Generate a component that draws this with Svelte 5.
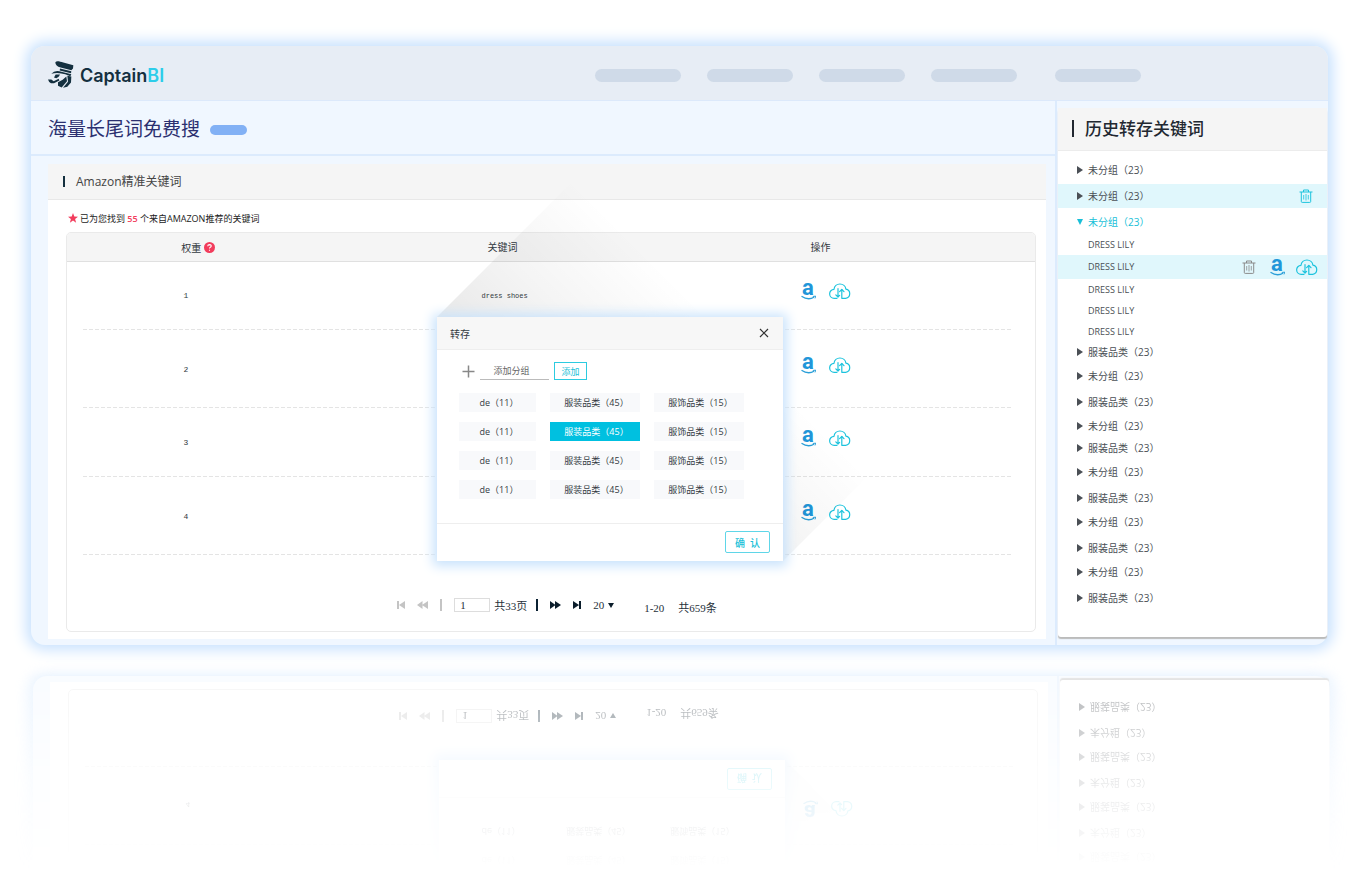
<script>
  const groups = ['de（11）', '服装品类（45）', '服饰品类（15）'];
  const rows = [1, 2, 3, 4];

  let keyword = $state('');
  let page = $state('1');
  let pageSize = $state('20');
  let selected = $state('1-1');

  const history = [
    { label: '未分组（23）' },
    { label: '未分组（23）', active: true, loose: true },
    { label: '未分组（23）', open: true, loose: true },
    { label: 'DRESS LILY', child: true },
    { label: 'DRESS LILY', child: true, active: true },
    { label: 'DRESS LILY', child: true },
    { label: 'DRESS LILY', child: true },
    { label: 'DRESS LILY', child: true },
    { label: '服装品类（23）', tight: true },
    { label: '未分组（23）' },
    { label: '服装品类（23）', loose: true },
    { label: '未分组（23）' },
    { label: '服装品类（23）', tight: true },
    { label: '未分组（23）' },
    { label: '服装品类（23）', loose: true },
    { label: '未分组（23）' },
    { label: '服装品类（23）', loose: true },
    { label: '未分组（23）' },
    { label: '服装品类（23）', loose: true }
  ];
</script>

{#snippet amazon()}
  <svg class="amazon" width="16" height="18" viewBox="0 0 16 18" aria-hidden="true">
    <text x="7" y="13" text-anchor="middle">a</text>
    <path d="M.5 14.300 Q7 18.600 13 15.300" fill="none" stroke="#2a9fd8" stroke-width="1.300" />
    <path d="M11.800 14.500 L14.600 14.100 L14 16.400" fill="none" stroke="#2a9fd8" />
  </svg>
{/snippet}

{#snippet cloud()}
  <svg width="22" height="18" viewBox="0 0 22 18" fill="none" stroke="#1cc3dd" stroke-width="1.200" stroke-linecap="round" stroke-linejoin="round" aria-hidden="true">
    <path d="M8 16.300 H5.300 A4.500 4.500 0 0 1 5 7.300 A6 6 0 0 1 16.900 7.200 A4.600 4.600 0 0 1 16.700 16.300 H12.800 V7.500" />
    <path d="M9 6.500 V15 M6.800 12.800 L9 15 L10.600 13.400 M10.600 9.700 L12.800 7.500 L15 9.700" />
  </svg>
{/snippet}

{#snippet trash()}
  <svg width="14" height="14" viewBox="0 0 14 14" fill="none" stroke="currentColor" aria-hidden="true">
    <path d="M.5 3 H13.500 M4.500 3 V1 H9.500 V3 M2.300 3 V12.500 Q2.300 13.400 3.200 13.400 H10.800 Q11.700 13.400 11.700 12.500 V3" />
    <path stroke-width=".8" d="M4.700 6 V10.500 M7 5 V11.500 M9.300 6 V10.500" />
  </svg>
{/snippet}

{#snippet board(id)}
  <div class="board">
    <header class="topbar">
      <a class="logo" href="#home">
        <svg width="26" height="27" viewBox="0 0 78 80" fill="#14303f" aria-hidden="true">
          <path d="M22 3 C27 -2 36 2 46 4 L76 12 L75 22 L70 27 L38 19 Q22 14 22 3Z" />
          <path d="M36 22 L70 30 L69 36 L35 28Z" />
          <path d="M10 38 Q19 27 34 30 L70 39 L67 45 Q50 38 40 37 Q26 33 10 38Z" />
          <path d="M23 40 L36 40 L32 47 L25 51 L18 49Z" />
          <path d="M0 55 H10 L17 60 L32 53 L34 58 L18 66 H9 Q2 63 0 55Z" />
          <path d="M58 44 L70 46 L69 64 L58 77 L45 80 L60 62 Z" />
          <path d="M30 63 L44 56 L55 46 L57 60 L41 79 L30 74Z" />
        </svg>
        <span class="brand">Captain<b>BI</b></span>
      </a>
      <div class="nav">
        <span></span><span></span><span></span><span></span><span class="last"></span>
      </div>
    </header>

    <div class="content">
      <main>
        <div class="title">
          <h1>海量长尾词免费搜</h1>
          <span class="pill"></span>
        </div>

        <section class="card">
          <h2>Amazon精准关键词</h2>
          <p class="found">
            <svg width="10" height="10" viewBox="0 0 10 10" aria-hidden="true"><path d="M5 0 L6.300 3.500 L10 3.700 L7.100 6 L8.100 9.700 L5 7.600 L1.900 9.700 L2.900 6 L0 3.700 L3.700 3.500Z" fill="#f23c5c" /></svg>
            <span>已为您找到 <b>55</b> 个来自AMAZON推荐的关键词</span>
          </p>

          <div class="box">
            <table>
              <thead>
                <tr>
                  <th class="weight">
                    <span>权重</span>
                    <svg width="11" height="11" viewBox="0 0 11 11" aria-hidden="true">
                      <circle cx="5.500" cy="5.500" r="5.500" fill="#f23c5c" />
                      <path d="M3.700 4.300 Q3.800 2.600 5.500 2.600 Q7.300 2.700 7.200 4.100 Q7.100 5 6 5.400 Q5.500 5.700 5.500 6.600 M5.500 7.700 V8.800" fill="none" stroke="#fff" stroke-width="1.100" />
                    </svg>
                  </th>
                  <th class="word">关键词</th>
                  <th class="ops">操作</th>
                </tr>
              </thead>
              <tbody>
                {#each rows as n}
                  <tr class:tall={n % 2 === 0}>
                    <td class="weight">{n}</td>
                    <td class="word">{n === 1 ? 'dress shoes' : ''}</td>
                    <td class="ops">
                      <div class="icons">
                        <button aria-label="Amazon">{@render amazon()}</button>
                        <button aria-label="转存">{@render cloud()}</button>
                      </div>
                    </td>
                  </tr>
                {/each}
              </tbody>
            </table>

            <div class="pager">
              <button class="off" aria-label="首页">
                <svg width="8" height="8" viewBox="0 0 8 8"><path d="M0 0 H2 V8 H0Z M8 0 V8 L2 4Z" /></svg>
              </button>
              <button class="off" aria-label="上一页">
                <svg width="11" height="8" viewBox="0 0 11 8"><path d="M5.500 0 V8 L0 4Z M11 0 V8 L5 4Z" /></svg>
              </button>
              <i class="bar off"></i>
              <input id="page-{id}" aria-label="页码" bind:value={page} />
              <label for="page-{id}">共33页</label>
              <i class="bar"></i>
              <button aria-label="下一页">
                <svg width="11" height="8" viewBox="0 0 11 8"><path d="M0 0 V8 L5.500 4Z M5 0 V8 L11 4Z" /></svg>
              </button>
              <button aria-label="末页">
                <svg width="8" height="8" viewBox="0 0 8 8"><path d="M6 0 H8 V8 H6Z M0 0 V8 L6 4Z" /></svg>
              </button>
              <span class="size">
                <select aria-label="每页条数" bind:value={pageSize}>
                  <option>20</option>
                  <option>50</option>
                </select>
                <svg width="6" height="5" viewBox="0 0 6 5"><path d="M0 0 H6 L3 5Z" /></svg>
              </span>
              <span class="total"><span>1-20</span><span>共659条</span></span>
            </div>
          </div>
        </section>
      </main>

      <aside>
        <h2>历史转存关键词</h2>
        <ul>
          {#each history as item}
            <li class:child={item.child} class:active={item.active} class:open={item.open} class:loose={item.loose} class:tight={item.tight}>
              <button class="entry">
                {#if !item.child}
                  <svg width="6" height="8" viewBox="0 0 6 8" aria-hidden="true">
                    <path d={item.open ? 'M0 1 H6 L3 7Z' : 'M0 0 L6 4 L0 8Z'} fill="currentColor" />
                  </svg>
                {/if}
                <span>{item.label}</span>
              </button>
              {#if item.active}
                <div class="tools" class:single={!item.child}>
                  <button aria-label="删除" class="bin">{@render trash()}</button>
                  {#if item.child}
                    <button aria-label="Amazon">{@render amazon()}</button>
                    <button aria-label="转存">{@render cloud()}</button>
                  {/if}
                </div>
              {/if}
            </li>
          {/each}
        </ul>
      </aside>
    </div>

    <!-- long diagonal shade behind the dialog -->
    <svg class="shade" width="1000" height="560" viewBox="0 0 1000 560" aria-hidden="true">
      <defs>
        <linearGradient id="shade-{id}" gradientUnits="userSpaceOnUse" x1="406" y1="271" x2="543" y2="134">
          <stop offset="0" stop-color="#000" stop-opacity=".09" />
          <stop offset=".5" stop-color="#000" stop-opacity=".04" />
          <stop offset="1" stop-color="#000" stop-opacity="0" />
        </linearGradient>
      </defs>
      <path d="M406 271 L600 77 L950 317 L752 515Z" fill="url(#shade-{id})" />
    </svg>

    <div class="dialog" role="dialog" aria-label="转存">
      <div class="dialog-head">
        <h3>转存</h3>
        <button aria-label="关闭">
          <svg width="10" height="10" viewBox="0 0 10 10"><path d="M1 1 L9 9 M9 1 L1 9" stroke="#333" stroke-width="1.200" /></svg>
        </button>
      </div>
      <div class="add">
        <svg width="13" height="13" viewBox="0 0 13 13" aria-hidden="true"><path d="M6.500 .5 V12.500 M.5 6.500 H12.500" stroke="#888" stroke-width="1.500" /></svg>
        <input aria-label="添加分组" placeholder="添加分组" bind:value={keyword} />
        <button>添加</button>
      </div>
      <div class="chips">
        {#each rows as n}
          {#each groups as g, i}
            <button class:on={selected === `${n - 1}-${i}`} onclick={() => (selected = `${n - 1}-${i}`)}>{g}</button>
          {/each}
        {/each}
      </div>
      <div class="dialog-foot">
        <button>确&nbsp; 认</button>
      </div>
    </div>
  </div>
{/snippet}

<div class="stage">
  {@render board('main')}
</div>
<div class="reflection" aria-hidden="true" inert>
  <div class="flip">
    {@render board('mirror')}
  </div>
</div>

<style>
  :global(body) {
    background: #fff;
    font-family: "Open Sans", "Noto Sans CJK SC", sans-serif;
    color: #333a42;
  }

  h1, h2, h3, p, ul {
    margin: 0;
    padding: 0;
    font-weight: 400;
  }

  button, input, select {
    font: inherit;
    color: inherit;
    background: none;
    border: 0;
    padding: 0;
    margin: 0;
  }

  button {
    cursor: pointer;
  }

  svg {
    display: block;
    flex: none;
  }

  .stage {
    padding: 46px 29px 0 31px;
  }

  .reflection {
    height: 198px;
    padding: 31px 27px 0 33px;
    overflow: hidden;
    -webkit-mask-image: linear-gradient(transparent 12px, rgba(0, 0, 0, .4) 31px, rgba(0, 0, 0, .34) 60px, rgba(0, 0, 0, .14) 130px, transparent 224px);
    mask-image: linear-gradient(transparent 12px, rgba(0, 0, 0, .4) 31px, rgba(0, 0, 0, .34) 60px, rgba(0, 0, 0, .14) 130px, transparent 224px);
  }

  .flip {
    transform: scaleY(-1);
  }

  .board {
    position: relative;
    border-radius: 14px;
    background: #f0f7ff;
    box-shadow: 0 0 14px 5px #c9e2fe;
  }

  .topbar {
    display: flex;
    align-items: center;
    justify-content: space-between;
    height: 54px;
    padding: 0 187px 0 17px;
    border-radius: 14px 14px 0 0;
    border-bottom: 1px solid #dce9fb;
    background: #e7edf5;
  }

  .logo {
    display: flex;
    align-items: center;
    gap: 6px;
    padding-top: 3px;
    text-decoration: none;
  }

  .brand {
    padding-top: 3px;
    font: 600 18px/24px Inter, sans-serif;
    color: #14303f;
  }

  .brand b {
    font-weight: 600;
    color: #2dcdea;
  }

  .nav {
    display: flex;
    gap: 26px;
    padding-top: 4px;
  }

  .nav span {
    width: 86px;
    height: 13px;
    border-radius: 7px;
    background: #cfdae8;
  }

  .nav .last {
    margin-left: 12px;
  }

  .content {
    display: flex;
  }

  main {
    flex: 1;
    padding-bottom: 6px;
    border-right: 2px solid #dcebfd;
  }

  .title {
    display: flex;
    align-items: center;
    gap: 10px;
    height: 51px;
    padding: 2px 18px 0 17px;
    border-bottom: 2px solid #dcebfd;
  }

  .title h1 {
    font-size: 19px;
    line-height: 26px;
    color: #2b3070;
  }

  .pill {
    width: 37px;
    height: 10px;
    margin-top: 2px;
    border-radius: 5px;
    background: #82b1f5;
  }

  .card {
    margin: 8px 9px 0 17px;
    padding-bottom: 7px;
    background: #fff;
  }

  .card h2 {
    height: 35px;
    padding-left: 28px;
    border-bottom: 1px solid #e8e8e8;
    background: #f5f5f5;
    font-size: 12px;
    line-height: 35px;
    color: #444;
  }

  .card h2::before,
  aside h2::before {
    content: "";
    float: left;
    width: 2px;
    height: 11px;
    margin: 12px 0 0 -13px;
    background: #14303f;
  }

  .found {
    display: flex;
    align-items: center;
    gap: 2px;
    height: 32px;
    padding: 4px 20px 0;
    box-sizing: border-box;
    font-size: 9px;
    color: #222;
  }

  .found b {
    font-weight: 600;
    color: #f23c5c;
  }

  .box {
    margin: 0 10px 0 18px;
    border: 1px solid #eaeaea;
    border-radius: 5px;
    overflow: hidden;
  }

  table {
    width: 100%;
    border-collapse: collapse;
    table-layout: fixed;
  }

  th {
    box-sizing: border-box;
    height: 28px;
    padding: 0;
    border-bottom: 1px solid #e0e0e0;
    background: #f5f5f5;
    font-size: 10px;
    font-weight: 400;
  }

  th.weight span,
  th.weight svg {
    display: inline-block;
    vertical-align: middle;
  }

  th.weight {
    padding-left: 20px;
  }

  .weight {
    width: 25%;
    text-align: center;
  }

  .word {
    width: 40%;
    text-align: center;
  }

  th.ops {
    padding-right: 90px;
  }

  tbody tr {
    height: 69px;
    background: repeating-linear-gradient(90deg, #e4e4e4 0 4px, transparent 4px 6px) 16px 100% / calc(100% - 38px) 1px no-repeat;
  }

  tbody tr.tall {
    height: 78px;
  }

  td {
    padding: 0;
    font: 8px "Liberation Mono", monospace;
  }

  td.weight {
    padding-right: 4px;
  }

  td.word {
    padding-left: 4px;
    font-size: 7px;
  }

  .icons {
    display: flex;
    justify-content: center;
    gap: 12px;
    padding: 0 80px 9px 0;
  }

  .amazon {
    overflow: visible;
  }

  .amazon text {
    font: 700 22px Roboto, sans-serif;
    fill: #2196d9;
  }

  .pager {
    display: flex;
    align-items: center;
    justify-content: center;
    gap: 12px;
    height: 52px;
    padding: 24px 0 0 12px;
    font: 11px "Liberation Serif", "Noto Sans CJK SC", serif;
    color: #26303a;
    fill: #0b1d2b;
  }

  .pager .off {
    fill: #c4c4c4;
  }

  .bar {
    width: 2px;
    height: 12px;
    background: #0b2233;
  }

  .bar.off {
    background: #c4c4c4;
  }

  .pager input {
    box-sizing: border-box;
    width: 36px;
    height: 14px;
    padding: 0 5px;
    border: 1px solid #ddd;
  }

  .pager label {
    margin: 0 -3px 0 -8px;
  }

  .size {
    display: flex;
    align-items: center;
    gap: 3px;
  }

  .size select {
    appearance: none;
    width: 12px;
  }

  .total {
    display: flex;
    align-items: baseline;
    gap: 14px;
    padding: 3px 0 0 18px;
  }

  aside {
    display: flex;
    flex-direction: column;
    width: 269px;
    margin: 7px 1px 8px;
    border-radius: 3px;
    background: #fff;
    box-shadow: 0 2px 1px #bbb;
  }

  aside h2 {
    height: 42px;
    padding-left: 27px;
    border-bottom: 1px solid #ececec;
    background: #f5f5f5;
    font-size: 17px;
    font-weight: 500;
    line-height: 41px;
    color: #222831;
  }

  aside h2::before {
    height: 17px;
    background: #222831;
  }

  ul {
    flex: 1;
    padding: 7px 0 25px;
    list-style: none;
  }

  .flip aside {
    margin-bottom: 4px;
  }

  .flip ul {
    padding: 23px 0 13px;
  }

  li {
    display: flex;
    align-items: center;
    justify-content: space-between;
    height: 24px;
    padding: 0 9px 0 19px;
    font-size: 10px;
    color: #4a4f55;
  }

  li.child {
    height: 21px;
    padding-left: 30px;
    font-size: 9px;
  }

  li.child.active {
    height: 24px;
  }

  li.loose {
    margin-top: 2px;
  }

  li.tight {
    margin-top: -2px;
  }

  li.active {
    background: #e0f7fc;
  }

  li.open {
    color: #19bfd8;
  }

  .entry {
    display: flex;
    align-items: center;
    gap: 5px;
    padding-bottom: 1px;
  }

  .tools {
    display: flex;
    align-items: center;
    gap: 10px;
  }

  .tools.single {
    padding-right: 5px;
  }

  .bin {
    margin-right: 4px;
    color: #8a8a8a;
  }

  .single .bin {
    margin-right: 0;
    color: #1cc3dd;
  }

  .shade {
    position: absolute;
    top: 0;
    left: 0;
    pointer-events: none;
  }

  .dialog {
    position: absolute;
    top: 271px;
    left: 406px;
    width: 346px;
    background: #fff;
    box-shadow: 0 1px 11px 4px #c9e3fc;
  }

  .dialog-head {
    display: flex;
    align-items: center;
    justify-content: space-between;
    height: 32px;
    padding: 0 14px 0 13px;
    border-bottom: 1px solid #eee;
    background: #f7f7f7;
  }

  .dialog-head h3 {
    font-size: 10px;
  }

  .add {
    display: flex;
    align-items: center;
    gap: 5px;
    padding: 12px 25px 0;
    font-size: 9px;
  }

  .add input {
    width: 69px;
    height: 17px;
    padding-right: 6px;
    box-sizing: border-box;
    border-bottom: 1px solid #bbb;
    text-align: center;
  }

  .add input::placeholder {
    color: #666;
    opacity: 1;
  }

  .add button {
    width: 33px;
    height: 18px;
    border: 1px solid #2ccbe0;
    color: #19bfd8;
  }

  .chips {
    display: grid;
    grid-template-columns: 77px 90px 90px;
    gap: 10px 14px;
    padding: 13px 22px 24px;
  }

  .chips button {
    height: 19px;
    padding-left: 3px;
    background: #f8f9fb;
    font-size: 9px;
  }

  .chips .on {
    background: #00c0e0;
    color: #fff;
  }

  .dialog-foot {
    display: flex;
    justify-content: flex-end;
    padding: 7px 13px 8px;
    border-top: 1px solid #eee;
  }

  .dialog-foot button {
    width: 45px;
    height: 22px;
    border: 1px solid #5fd6e8;
    border-radius: 2px;
    font-size: 10px;
    font-weight: 500;
    color: #19bfd8;
  }
</style>
